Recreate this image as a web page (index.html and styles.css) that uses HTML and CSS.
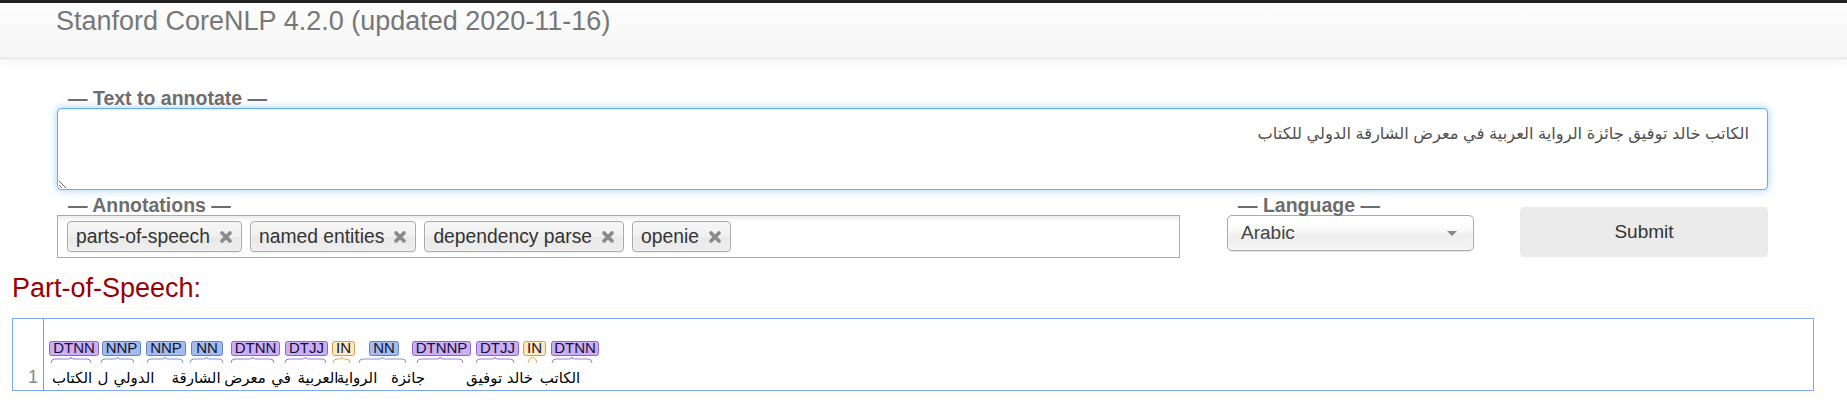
FILE: index.html
```html
<!DOCTYPE html>
<html lang="en">
<head>
<meta charset="utf-8">
<title>Stanford CoreNLP</title>
<link rel="stylesheet" href="styles.css">
</head>
<body>
<div class="topbar"></div>
<header class="header">
  <div class="brand">Stanford CoreNLP 4.2.0 (updated 2020-11-16)</div>
</header>

<main class="form">
  <div class="label">— Text to annotate —</div>
  <textarea class="text" dir="rtl">الكاتب خالد توفيق جائزة الرواية العربية في معرض الشارقة الدولي للكتاب</textarea>

  <div class="row">
    <div class="col-ann">
      <div class="label">— Annotations —</div>
      <div class="chips">
        <span class="chip">parts-of-speech<svg class="x" viewBox="0 0 14 14"><path d="M3 3L11 11M11 3L3 11"/></svg></span>
        <span class="chip">named entities<svg class="x" viewBox="0 0 14 14"><path d="M3 3L11 11M11 3L3 11"/></svg></span>
        <span class="chip">dependency parse<svg class="x" viewBox="0 0 14 14"><path d="M3 3L11 11M11 3L3 11"/></svg></span>
        <span class="chip">openie<svg class="x" viewBox="0 0 14 14"><path d="M3 3L11 11M11 3L3 11"/></svg></span>
      </div>
    </div>
    <div class="col-lang">
      <div class="label">— Language —</div>
      <div class="select"><span>Arabic</span><svg class="arrow" viewBox="0 0 12 7"><path d="M1 1L11 1L6 6Z"/></svg></div>
    </div>
    <button class="submit" type="button">Submit</button>
  </div>
</main>

<section class="results">
  <h2 class="pos-title">Part-of-Speech:</h2>
  <div class="brat">
    <svg class="brat-svg" width="1800" height="71" viewBox="0 0 1800 71">
      <line class="gutter" x1="30.5" y1="0" x2="30.5" y2="71"/>
      <text class="lineno" x="25" y="64">1</text>

      <g class="tag purple"><rect x="36.5" y="22.5" width="49" height="14" rx="2"/><text x="61" y="34">DTNN</text></g>
      <g class="tag blue"><rect x="89.5" y="22.5" width="38" height="14" rx="2"/><text x="108.5" y="34">NNP</text></g>
      <g class="tag blue"><rect x="133.5" y="22.5" width="39" height="14" rx="2"/><text x="153" y="34">NNP</text></g>
      <g class="tag blue"><rect x="178.5" y="22.5" width="31" height="14" rx="2"/><text x="194" y="34">NN</text></g>
      <g class="tag purple"><rect x="218.5" y="22.5" width="48" height="14" rx="2"/><text x="242.5" y="34">DTNN</text></g>
      <g class="tag purple"><rect x="272.5" y="22.5" width="42" height="14" rx="2"/><text x="293.5" y="34">DTJJ</text></g>
      <g class="tag orange"><rect x="319.5" y="22.5" width="22" height="14" rx="2"/><text x="330.5" y="34">IN</text></g>
      <g class="tag blue"><rect x="356.5" y="22.5" width="29" height="14" rx="2"/><text x="371" y="34">NN</text></g>
      <g class="tag purple"><rect x="399.5" y="22.5" width="58" height="14" rx="2"/><text x="428.5" y="34">DTNNP</text></g>
      <g class="tag purple"><rect x="463.5" y="22.5" width="42" height="14" rx="2"/><text x="484.5" y="34">DTJJ</text></g>
      <g class="tag orange"><rect x="510.5" y="22.5" width="22" height="14" rx="2"/><text x="521.5" y="34">IN</text></g>
      <g class="tag purple"><rect x="538.5" y="22.5" width="47" height="14" rx="2"/><text x="562" y="34">DTNN</text></g>

      <path class="brace purple" d="M38 44Q38 40 42 40L55 40Q58 40 58 38Q58 40 61 40L74 40Q78 40 78 44"/>
      <path class="brace blue" d="M88 44Q88 40 92 40L101.5 40Q104.5 40 104.5 38Q104.5 40 107.5 40L117 40Q121 40 121 44"/>
      <path class="brace blue" d="M134 44Q134 40 138 40L149 40Q152 40 152 38Q152 40 155 40L166 40Q170 40 170 44"/>
      <path class="brace blue" d="M177 44Q177 40 181 40L190.5 40Q193.5 40 193.5 38Q193.5 40 196.5 40L206 40Q210 40 210 44"/>
      <path class="brace purple" d="M218 44Q218 40 222 40L236.5 40Q239.5 40 239.5 38Q239.5 40 242.5 40L257 40Q261 40 261 44"/>
      <path class="brace purple" d="M272 44Q272 40 276 40L289.5 40Q292.5 40 292.5 38Q292.5 40 295.5 40L309 40Q313 40 313 44"/>
      <path class="brace orange" d="M320 44Q320 40 324 40L326.5 40Q328.5 40 328.5 38Q328.5 40 330.5 40L333 40Q337 40 337 44"/>
      <path class="brace blue" d="M346 44Q346 40 350 40L366.5 40Q369.5 40 369.5 38Q369.5 40 372.5 40L389 40Q393 40 393 44"/>
      <path class="brace purple" d="M404 44Q404 40 408 40L424 40Q427 40 427 38Q427 40 430 40L446 40Q450 40 450 44"/>
      <path class="brace purple" d="M463 44Q463 40 467 40L479 40Q482 40 482 38Q482 40 485 40L497 40Q501 40 501 44"/>
      <path class="brace orange" d="M515 44Q515 40 519.5 38Q524 40 524 44"/>
      <path class="brace purple" d="M539 44Q539 40 543 40L556 40Q559 40 559 38Q559 40 562 40L575 40Q579 40 579 44"/>

      <g class="words">
        <text x="59" y="64">الكتاب</text>
        <text x="90" y="64">ل</text>
        <text x="121" y="64">الدولي</text>
        <text x="183" y="64">الشارقة</text>
        <text x="232" y="64">معرض</text>
        <text x="268" y="64">في</text>
        <text x="305" y="64">العربية</text>
        <text x="344" y="64">الرواية</text>
        <text x="395" y="64">جائزة</text>
        <text x="471" y="64">توفيق</text>
        <text x="507" y="64">خالد</text>
        <text x="547" y="64">الكاتب</text>
      </g>
    </svg>
  </div>
</section>
</body>
</html>
```

FILE: styles.css
```css
body {
  margin: 0;
  font-family: "Liberation Sans", Arial, "DejaVu Sans", sans-serif;
  background: #ffffff;
  color: #333333;
}

.topbar {
  height: 3px;
  background: #222222;
}

.header {
  height: 55px;
  padding-left: 56px;
  border-bottom: 1px solid #e4e4e4;
  background: linear-gradient(#fdfdfd, #f5f5f5);
  box-shadow: 0 3px 9px rgba(0, 0, 0, 0.05);
}

.brand {
  padding-top: 3px;
  font-size: 27px;
  line-height: 31px;
  color: #777777;
}

.form {
  width: 1711px;
  margin: 29px 0 0 57px;
}

.label {
  padding-left: 11px;
  font-size: 19.5px;
  font-weight: bold;
  line-height: 20px;
  color: #6d6d6d;
}

.text {
  display: block;
  box-sizing: border-box;
  width: 100%;
  height: 82px;
  margin: 0;
  padding: 12px 18px 0 12px;
  border: 1px solid #66afe9;
  border-radius: 4px;
  box-shadow: inset 0 1px 1px rgba(0, 0, 0, 0.075), 0 0 8px rgba(102, 175, 233, 0.6);
  outline: none;
  resize: vertical;
  font-family: "Liberation Sans", "DejaVu Sans", sans-serif;
  font-size: 16.3px;
  line-height: 24px;
  color: #505050;
}

.row {
  display: flex;
  align-items: flex-start;
  margin-top: 5px;
}

.col-ann {
  width: 1123px;
}

.chips {
  display: flex;
  align-items: flex-start;
  gap: 8px;
  box-sizing: border-box;
  height: 43px;
  padding: 5px 9px;
  border: 1px solid #aaaaaa;
  background: linear-gradient(#eeeeee 1%, #ffffff 15%);
}

.chip {
  display: flex;
  align-items: center;
  gap: 9px;
  box-sizing: border-box;
  height: 31px;
  padding: 1px 8px 0 8px;
  border: 1px solid #aaaaaa;
  border-radius: 4px;
  background: linear-gradient(#f4f4f4 20%, #f0f0f0 50%, #e8e8e8 52%, #eeeeee 100%);
  box-shadow: inset 0 0 2px #ffffff, 0 1px 0 rgba(0, 0, 0, 0.05);
  font-size: 19.3px;
  color: #333333;
}

.x {
  width: 14px;
  height: 14px;
  fill: none;
  stroke: #8a8a8a;
  stroke-width: 3.6;
  stroke-linecap: round;
}

.col-lang {
  width: 247px;
  margin-left: 47px;
}

.select {
  display: flex;
  align-items: center;
  justify-content: space-between;
  box-sizing: border-box;
  height: 36px;
  padding: 0 15px 0 13px;
  border: 1px solid #aaaaaa;
  border-radius: 5px;
  background: linear-gradient(#ffffff 20%, #f6f6f6 50%, #eeeeee 52%, #f4f4f4 100%);
  box-shadow: inset 0 0 3px #ffffff, 0 1px 1px rgba(0, 0, 0, 0.1);
  font-size: 19px;
  color: #444444;
}

.arrow {
  width: 12px;
  height: 7px;
  fill: #888888;
}

.submit {
  width: 248px;
  height: 50px;
  margin: 12px 0 0 46px;
  padding: 0;
  border: none;
  border-radius: 4px;
  background: #ebebeb;
  font-family: "Liberation Sans", Arial, sans-serif;
  font-size: 19px;
  color: #333333;
}

.results {
  width: 1802px;
  margin: 15px 0 0 12px;
}

.pos-title {
  margin: 0;
  font-size: 27px;
  font-weight: normal;
  line-height: 31px;
  color: #990000;
}

.brat {
  box-sizing: border-box;
  height: 73px;
  margin-top: 14px;
  border: 1px solid #7fa7ff;
}

.brat-svg {
  display: block;
}

.gutter {
  stroke: #9a9a9a;
  stroke-width: 1;
}

.lineno {
  font-family: "Liberation Sans", Arial, sans-serif;
  font-size: 18px;
  fill: #888888;
  text-anchor: end;
}

.tag rect {
  stroke-width: 1;
}

.tag text {
  font-family: "Liberation Sans", Arial, sans-serif;
  font-size: 15px;
  fill: #111133;
  text-anchor: middle;
}

.tag.purple rect { fill: #ccadf6; stroke: #8b68c6; }
.tag.blue rect { fill: #a4bced; stroke: #5f82c4; }
.tag.orange rect { fill: #ffe8be; stroke: #d2a054; }

.brace {
  fill: none;
  stroke-width: 1;
}

.brace.purple { stroke: #9b7fd0; }
.brace.blue { stroke: #7d97cc; }
.brace.orange { stroke: #d8aa62; }

.words text {
  font-family: "Liberation Sans", "DejaVu Sans", sans-serif;
  font-size: 15px;
  fill: #000000;
  text-anchor: middle;
}
```
